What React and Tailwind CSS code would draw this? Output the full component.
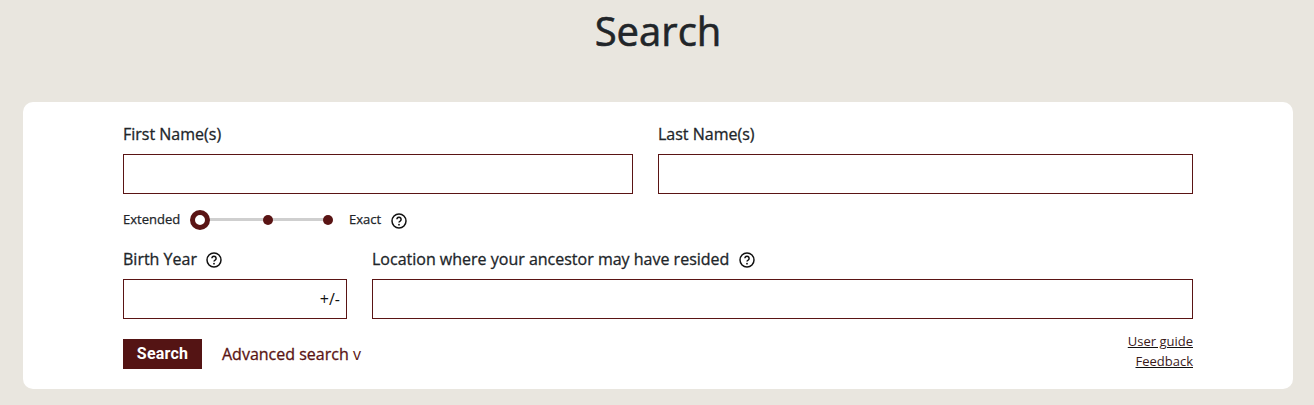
import React from 'react';

const HelpIcon = () => (
  <svg width="16" height="16" viewBox="0 0 16 16" fill="none" className="shrink-0">
    <circle cx="8" cy="8" r="7" stroke="#111" strokeWidth="1.5" />
    <path d="M5.9 6.3a2.1 2.1 0 1 1 3.2 1.8c-.7.4-1.1.8-1.1 1.5" stroke="#111" strokeWidth="1.5" fill="none" />
    <circle cx="8" cy="11.7" r="0.9" fill="#111" />
  </svg>
);

const TextField = ({ className = '', children }) => (
  <div className={`relative h-10 border border-[#5a1414] bg-white ${className}`}>
    <input type="text" className="w-full h-full px-2 outline-none bg-transparent" />
    {children}
  </div>
);

const PrecisionSlider = () => (
  <div className="relative w-[143px] h-5 flex items-center">
    <div className="absolute left-2 right-1 top-[8px] h-[3px] bg-[#cfcfcf]" />
    <span className="relative w-5 h-5 rounded-full border-[5px] border-[#5a1414] bg-white" />
    <span className="relative w-[10px] h-[10px] rounded-full bg-[#5a1414] ml-[53px]" />
    <span className="relative w-[10px] h-[10px] rounded-full bg-[#5a1414] ml-[50px]" />
  </div>
);

export default function App() {
  return (
    <div className="min-h-[405px] bg-[#e9e6df] font-['Open_Sans',sans-serif] text-[#212529] pl-[23px] pr-[21px] pt-[5px]">
      <h1 className="text-[40px] leading-[52px] font-medium text-center mb-[45px] [-webkit-text-stroke:0.6px]">Search</h1>

      <form className="bg-white rounded-[10px] h-[287px] px-[100px] pt-[21px]">
        <div className="flex gap-[25px]">
          <div className="w-[510px]">
            <label className="block text-[16px] leading-[22px] font-medium mb-[9px] [-webkit-text-stroke:0.3px]">First Name(s)</label>
            <TextField />
          </div>
          <div className="flex-1">
            <label className="block text-[16px] leading-[22px] font-medium mb-[9px] [-webkit-text-stroke:0.3px]">Last Name(s)</label>
            <TextField />
          </div>
        </div>

        <div className="flex items-center h-5 mt-[16px] text-[13px] font-medium [-webkit-text-stroke:0.25px]">
          <span className="w-[67px]">Extended</span>
          <PrecisionSlider />
          <span className="ml-[16px] -mt-[1px]">Exact</span>
          <span className="ml-[10px] mt-[1px]"><HelpIcon /></span>
        </div>

        <div className="flex gap-[25px] mt-[18px]">
          <div className="w-[224px]">
            <div className="flex items-center gap-[9px] h-[22px] mb-[9px]">
              <label className="text-[16px] leading-[22px] font-medium [-webkit-text-stroke:0.3px]">Birth Year</label>
              <span className="mt-[2px]"><HelpIcon /></span>
            </div>
            <TextField>
              <span className="absolute right-[6px] top-[9px] text-[16px] leading-[20px] text-[#111]">+/-</span>
            </TextField>
          </div>
          <div className="flex-1">
            <div className="flex items-center gap-[10px] h-[22px] mb-[9px]">
              <label className="text-[16px] leading-[22px] font-medium [-webkit-text-stroke:0.3px]">Location where your ancestor may have resided</label>
              <span className="mt-[2px]"><HelpIcon /></span>
            </div>
            <TextField />
          </div>
        </div>

        <div className="flex items-start justify-between mt-[10px]">
          <div className="flex items-center mt-[10px]">
            <button type="button" className="w-[79px] h-[30px] bg-[#541414] text-white font-['Roboto',sans-serif] font-bold text-[16px] tracking-[0.2px]">Search</button>
            <a className="ml-5 text-[16px] font-medium text-[#5a1414] [-webkit-text-stroke:0.3px]">Advanced search <span className="text-[16px] font-normal [-webkit-text-stroke:0px]">v</span></a>
          </div>
          <div className="flex flex-col items-end mt-[2px] text-[13px] leading-5 text-[#3a1a1a]">
            <a className="underline decoration-[#111]">User guide</a>
            <a className="underline decoration-[#111]">Feedback</a>
          </div>
        </div>
      </form>
    </div>
  );
}
